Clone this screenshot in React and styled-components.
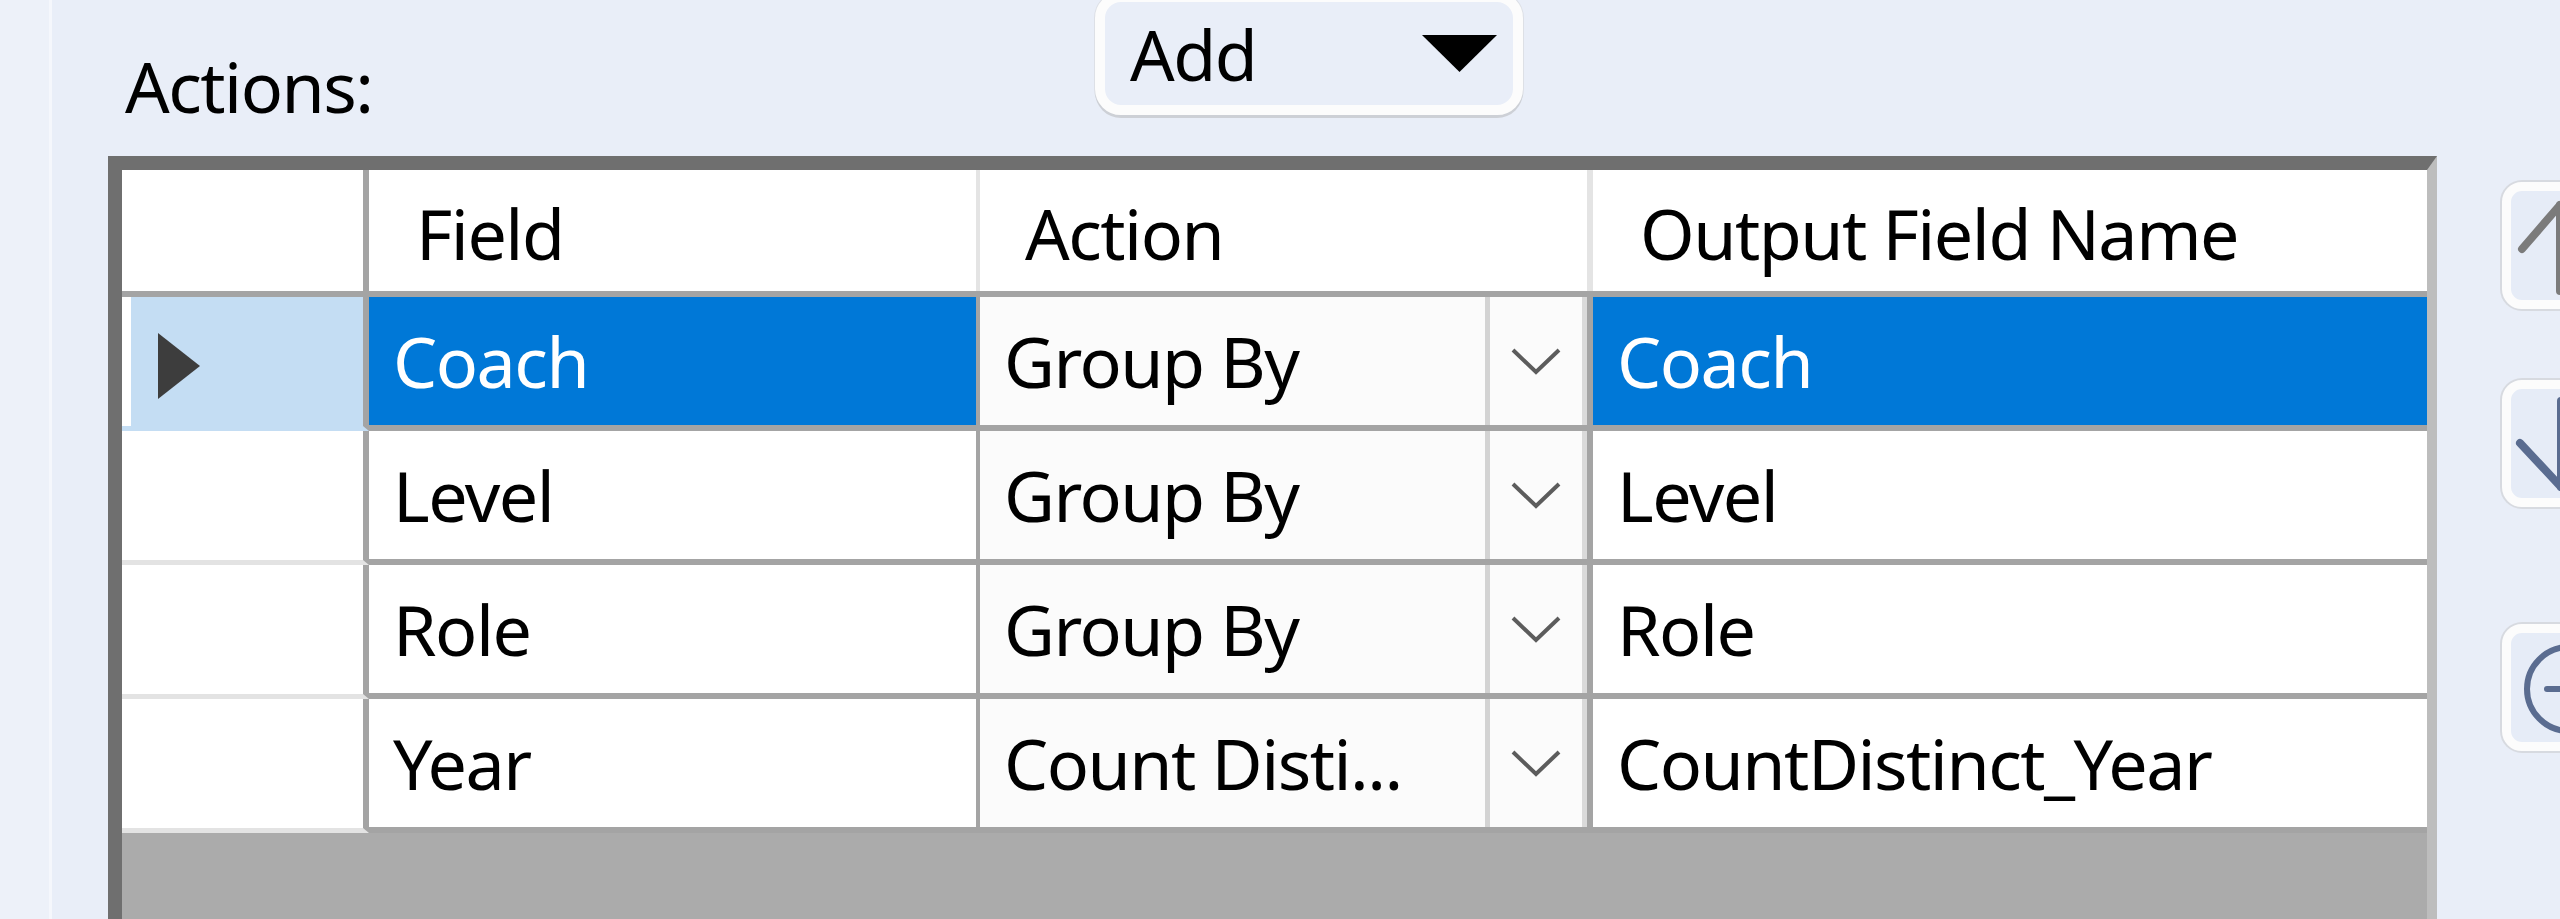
import React from 'react';
import styled, { createGlobalStyle } from 'styled-components';

const Global = createGlobalStyle`
  html, body { margin: 0; padding: 0; width: 2560px; height: 919px; overflow: hidden; background: #e9eef8; }
  #root { width: 2560px; height: 919px; }
  * { box-sizing: border-box; }
`;

const Page = styled.div`
  display: flex;
  width: 2560px;
  height: 919px;
  overflow: hidden;
  background: #e9eef8;
  font-family: "Noto Sans", "Open Sans", sans-serif;
  font-size: 70px;
  letter-spacing: -1.5px;
  color: #000;
`;

const LeftStrip = styled.div`
  flex: 0 0 52px;
  background: #edf1f9;
  border-right: 3px solid #f5f7fc;
`;

const Main = styled.div`
  flex: 0 0 auto;
  display: flex;
  flex-direction: column;
  padding-left: 56px;
  height: 100%;
`;

const TopBar = styled.div`
  display: grid;
  grid-template-columns: 987px 428px;
  height: 156px;
  flex: 0 0 156px;
`;

const Label = styled.div`
  padding-left: 17px;
  padding-top: 51px;
  line-height: 70px;
`;

const AddButton = styled.div`
  margin-top: -8px;
  height: 123px;
  border: 10px solid #fcfcfc;
  border-radius: 26px;
  background: #e9eef8;
  box-shadow: 0 3px 0 #cdd0d6, 0 0 0 1px #dde0e6;
  display: flex;
  align-items: center;
  justify-content: space-between;
  padding: 0 16px 0 25px;
  line-height: 70px;
`;

const Body = styled.div`
  display: flex;
  flex: 1 1 auto;
  min-height: 0;
`;

const Table = styled.div`
  width: 2329px;
  display: flex;
  flex-direction: column;
  border-top: 14px solid #6f6f6f;
  border-left: 14px solid #6f6f6f;
  border-right: 10px solid #bdbdbd;
  background: #ababab;
`;

const HeaderRow = styled.div`
  display: flex;
  flex: 0 0 127px;
  height: 127px;
  background: #fff;
  border-bottom: 6px solid #a4a4a4;
`;

const HeaderCell = styled.div`
  flex: ${p => (p.$w ? `0 0 ${p.$w}px` : '1 1 auto')};
  display: flex;
  align-items: center;
  padding-left: ${p => p.$pad ?? 47}px;
  padding-top: 4px;
  border-right: ${p => (p.$line ? `${p.$line}px solid ${p.$lineColor || '#e4e4e4'}` : 'none')};
  white-space: nowrap;
  line-height: 70px;
`;

const DataRow = styled.div`
  display: flex;
  flex: 0 0 134px;
  height: 134px;
`;

const RowHeader = styled.div`
  flex: 0 0 247px;
  display: flex;
  align-items: center;
  padding-left: 36px;
  padding-top: 8px;
  background: ${p => (p.$selected ? '#c4ddf3' : '#fff')};
  box-shadow: inset 9px 0 0 #fff;
  border-right: 6px solid #a4a4a4;
  border-bottom: 5px solid ${p => (p.$selected ? '#c4ddf3' : '#e3e3e3')};
`;

const Cell = styled.div`
  flex: ${p => (p.$w ? `0 0 ${p.$w}px` : '1 1 auto')};
  display: flex;
  align-items: center;
  padding-left: 24px;
  background: ${p => (p.$selected ? '#0078d7' : '#fff')};
  color: ${p => (p.$selected ? '#fff' : '#000')};
  border-right: ${p => (p.$line ? `${p.$line}px solid #a4a4a4` : 'none')};
  border-bottom: 6px solid #a4a4a4;
  white-space: nowrap;
  line-height: 70px;
`;

const ActionCell = styled.div`
  flex: 0 0 613px;
  display: flex;
  background: #fbfbfb;
  border-right: 6px solid #a4a4a4;
  border-bottom: 6px solid #a4a4a4;
`;

const ComboText = styled.div`
  flex: 1 1 auto;
  display: flex;
  align-items: center;
  padding-left: 24px;
  overflow: hidden;
  white-space: nowrap;
  line-height: 70px;
`;

const ComboButton = styled.div`
  flex: 0 0 102px;
  display: flex;
  align-items: center;
  justify-content: center;
  border-left: 5px solid #d3d3d3;
  border-right: 5px solid #dadada;
`;

const Filler = styled.div`
  flex: 1 1 auto;
  background: #ababab;
`;

const SideColumn = styled.div`
  margin-left: 65px;
  display: flex;
  flex-direction: column;
  padding-top: 26px;
`;

const SideButton = styled.div`
  width: 120px;
  height: 127px;
  margin-top: ${p => p.$mt || 0}px;
  border: 9px solid #fcfcfc;
  border-radius: 20px;
  background: #e6ecf7;
  box-shadow: 0 0 0 2px #d7dae0;
  display: flex;
`;

const Marker = () => (
  <svg width="42" height="66" viewBox="0 0 42 66">
    <polygon points="0,0 42,33 0,66" fill="#3d3d3d" />
  </svg>
);

const Chevron = () => (
  <svg width="52" height="28" viewBox="0 0 52 28">
    <polyline points="3,3 26,25 49,3" fill="none" stroke="#5c5c5c" strokeWidth="4" />
  </svg>
);

const Triangle = () => (
  <svg width="75" height="37" viewBox="0 0 75 37">
    <polygon points="0,0 75,0 37.5,37" fill="#000" />
  </svg>
);

const UpIcon = () => (
  <svg width="102" height="109" viewBox="0 0 102 109">
    <g fill="none" stroke="#7b7b7b" strokeWidth="8" strokeLinecap="round" strokeLinejoin="round">
      <polyline points="11,58 49,14 87,58" />
      <line x1="49" y1="14" x2="49" y2="100" />
    </g>
  </svg>
);

const DownIcon = () => (
  <svg width="102" height="109" viewBox="0 0 102 109">
    <g fill="none" stroke="#5a6c90" strokeWidth="8" strokeLinecap="round" strokeLinejoin="round">
      <polyline points="9,54 50,98 91,54" />
      <line x1="50" y1="12" x2="50" y2="98" />
    </g>
  </svg>
);

const RemoveIcon = () => (
  <svg width="102" height="109" viewBox="0 0 102 109">
    <g fill="none" stroke="#5a6c90" strokeWidth="6" strokeLinecap="round">
      <circle cx="58" cy="56" r="42" />
      <line x1="36" y1="56" x2="80" y2="56" />
    </g>
  </svg>
);

const rows = [
  { field: 'Coach', action: 'Group By', output: 'Coach', selected: true },
  { field: 'Level', action: 'Group By', output: 'Level' },
  { field: 'Role', action: 'Group By', output: 'Role' },
  { field: 'Year', action: 'Count Disti...', output: 'CountDistinct_Year' },
];

export default function App() {
  return (
    <>
      <Global />
      <Page>
        <LeftStrip />
        <Main>
          <TopBar>
            <Label>Actions:</Label>
            <AddButton>
              <span>Add</span>
              <Triangle />
            </AddButton>
          </TopBar>
          <Body>
            <Table>
              <HeaderRow>
                <HeaderCell $w={247} $line={6} $lineColor="#a4a4a4" />
                <HeaderCell $w={611} $line={4}>Field</HeaderCell>
                <HeaderCell $w={613} $line={6} $pad={45}>Action</HeaderCell>
                <HeaderCell>Output Field Name</HeaderCell>
              </HeaderRow>
              {rows.map(r => (
                <DataRow key={r.field}>
                  <RowHeader $selected={r.selected}>{r.selected && <Marker />}</RowHeader>
                  <Cell $w={611} $line={4} $selected={r.selected}>{r.field}</Cell>
                  <ActionCell>
                    <ComboText>{r.action}</ComboText>
                    <ComboButton><Chevron /></ComboButton>
                  </ActionCell>
                  <Cell $selected={r.selected}>{r.output}</Cell>
                </DataRow>
              ))}
              <Filler />
            </Table>
            <SideColumn>
              <SideButton><UpIcon /></SideButton>
              <SideButton $mt={71}><DownIcon /></SideButton>
              <SideButton $mt={117}><RemoveIcon /></SideButton>
            </SideColumn>
          </Body>
        </Main>
      </Page>
    </>
  );
}
